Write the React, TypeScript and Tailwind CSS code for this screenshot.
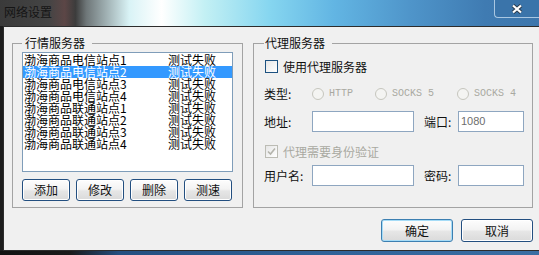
import React from 'react';

const servers = [
  { name: '渤海商品电信站点1', status: '测试失败' },
  { name: '渤海商品电信站点2', status: '测试失败' },
  { name: '渤海商品电信站点3', status: '测试失败' },
  { name: '渤海商品电信站点4', status: '测试失败' },
  { name: '渤海商品联通站点1', status: '测试失败' },
  { name: '渤海商品联通站点2', status: '测试失败' },
  { name: '渤海商品联通站点3', status: '测试失败' },
  { name: '渤海商品联通站点4', status: '测试失败' },
];

function Button({ label, primary, wide }: { label: string; primary?: boolean; wide?: boolean }) {
  return (
    <button
      className={
        (wide ? 'h-[23px] w-[72px] ' : 'h-[22px] w-[48px] ') +
        (primary
          ? 'border-[#3c7fb1] shadow-[inset_0_0_0_1px_#a6dcf7] '
          : 'border-[#234f80] shadow-[inset_0_0_0_1px_#ffffff] ') +
        'flex items-center justify-center rounded-[3px] border bg-[linear-gradient(#fdfdfd,#f3f3f3_45%,#e6e6e6_55%,#dadada)] text-[12px] leading-[12px] text-[#111]'
      }
    >
      {label}
    </button>
  );
}

function Checkbox({ checked, disabled }: { checked?: boolean; disabled?: boolean }) {
  return (
    <span
      className={
        (disabled ? 'border-[#bcbcb4] ' : 'border-[#1c5180] ') +
        'flex h-[13px] w-[13px] shrink-0 items-center justify-center border bg-[linear-gradient(135deg,#e6e6e6,#ffffff)]'
      }
    >
      {checked && (
        <svg width="9" height="9" viewBox="0 0 9 9">
          <path d="M1 4.5 L3.5 7 L8 1.5" fill="none" stroke="#b4b4ac" strokeWidth="1.6" />
        </svg>
      )}
    </span>
  );
}

function Radio({ label }: { label: string }) {
  return (
    <div className="flex items-center gap-[5px]">
      <span className="h-[12px] w-[12px] rounded-full border border-[#c6c6be] bg-[#f4f4f2]" />
      <span className="font-['Liberation_Mono',monospace] text-[10px] leading-[12px] text-[#a9a9a1]">{label}</span>
    </div>
  );
}

function Input({ width, value }: { width: string; value?: string }) {
  return (
    <div className={width + ' flex h-[21px] items-center border border-[#8ea6c0] bg-white pl-[2px]'}>
      {value && <span className="font-['Liberation_Sans',sans-serif] text-[11px] text-[#6d6d6d]">{value}</span>}
    </div>
  );
}

export default function App() {
  return (
    <div className="relative h-[255px] w-[539px] overflow-hidden bg-[#1c1c1c] font-['Noto_Sans_CJK_SC',sans-serif]">
      {/* title bar */}
      <div className="flex h-[26px] items-start bg-[linear-gradient(to_right,#3a3a3a_0%,#444_9%,#5c4646_12%,#3c3c3c_14%,#6e7678_16%,#d9f3f6_24%,#ffffff_30%,#c3f0f4_38%,#86d6f0_50%,#62b5e3_62%,#4f95ca_76%,#3f7bb2_90%,#3d76ac_100%)]">
        <span className="ml-[4px] mt-[6px] text-[12px] leading-[12px] text-[#151515]">网络设置</span>
        <div className="ml-auto flex h-[18px] w-[45px] items-center justify-center rounded-bl-[4px] border-b border-l border-[#a9c7e2] bg-[#3a74aa]">
          <svg width="12" height="10" viewBox="0 0 12 10">
            <path d="M2 1.5 L10 8.5 M10 1.5 L2 8.5" stroke="#2b3b4c" strokeWidth="4" />
            <path d="M2 1.5 L10 8.5 M10 1.5 L2 8.5" stroke="#ffffff" strokeWidth="2.2" />
          </svg>
        </div>
      </div>

      {/* dialog body */}
      <div className="ml-[3px] h-[225px] border-b border-l border-t border-[#2c2c2c] bg-[#f0f0f0]">
        <div className="ml-[8px] w-[521px]">
          <div className="mt-[10px] flex gap-[10px]">
            {/* market servers */}
            <fieldset className="h-[171px] w-[231px] border border-[#a3a3a3] pl-[9px]">
              <legend className="pl-[3px] pr-[7px] text-[12px] leading-[12px] text-[#111]">行情服务器</legend>
              <div className="mt-[3px] h-[120px] w-[211px] border border-[#7f9db9] bg-white pt-[1px]">
                {servers.map((s, i) => (
                  <div
                    key={s.name}
                    className={
                      (i === 1 ? 'bg-[#3399ff] text-white ' : 'text-[#000] ') +
                      'flex h-[12px] items-center pl-[1px] text-[12px] leading-[12px]'
                    }
                  >
                    <span className="w-[144px]">{s.name}</span>
                    <span>{s.status}</span>
                  </div>
                ))}
              </div>
              <div className="mt-[7px] flex gap-[6px]">
                <Button label="添加" />
                <Button label="修改" />
                <Button label="删除" />
                <Button label="测速" />
              </div>
            </fieldset>

            {/* proxy server */}
            <fieldset className="h-[171px] w-[280px] border border-[#a3a3a3] pl-[10px]">
              <legend className="pl-[1px] pr-[7px] text-[12px] leading-[12px] text-[#111]">代理服务器</legend>
              <div className="ml-[1px] mt-[11px] flex h-[13px] items-center gap-[5px]">
                <Checkbox />
                <span className="text-[12px] leading-[12px] text-[#111]">使用代理服务器</span>
              </div>
              <div className="mt-[15px] flex h-[12px] items-center">
                <span className="w-[48px] text-[12px] leading-[12px] text-[#111]">类型:</span>
                <div className="w-[63px]">
                  <Radio label="HTTP" />
                </div>
                <div className="w-[82px]">
                  <Radio label="SOCKS 5" />
                </div>
                <Radio label="SOCKS 4" />
              </div>
              <div className="mt-[11px] flex h-[21px] items-center">
                <span className="w-[48px] text-[12px] leading-[12px] text-[#111]">地址:</span>
                <Input width="w-[102px]" />
                <span className="ml-[10px] w-[34px] text-[12px] leading-[12px] text-[#111]">端口:</span>
                <Input width="w-[66px]" value="1080" />
              </div>
              <div className="ml-[1px] mt-[13px] flex h-[13px] items-center gap-[5px]">
                <Checkbox checked disabled />
                <span className="text-[12px] leading-[12px] text-[#a9a9a1]">代理需要身份验证</span>
              </div>
              <div className="mt-[7px] flex h-[21px] items-center">
                <span className="w-[48px] text-[12px] leading-[12px] text-[#111]">用户名:</span>
                <Input width="w-[102px]" />
                <span className="ml-[10px] w-[34px] text-[12px] leading-[12px] text-[#111]">密码:</span>
                <Input width="w-[66px]" />
              </div>
            </fieldset>
          </div>

          <div className="mt-[11px] flex justify-end gap-[8px]">
            <Button label="确定" primary wide />
            <Button label="取消" wide />
          </div>
        </div>
      </div>

      {/* taskbar edge */}
      <div className="h-[4px] bg-[linear-gradient(to_right,#121212_0%,#1a1a1a_13%,#244f80_22%,#2f6298_60%,#3a6ea3_100%)]" />
    </div>
  );
}
